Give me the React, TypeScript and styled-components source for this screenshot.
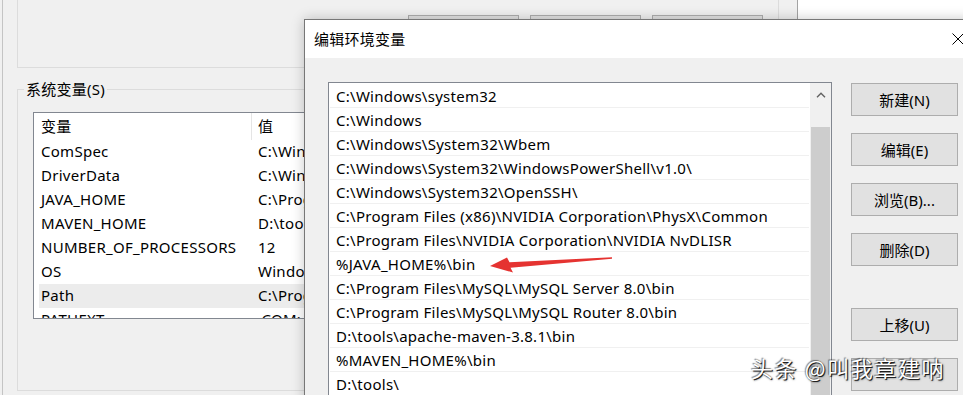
import React from 'react';
import styled, { createGlobalStyle } from 'styled-components';

const GlobalStyle = createGlobalStyle`
  html, body { margin: 0; padding: 0; width: 963px; height: 395px; overflow: hidden; background: #f0f0f0; }
  body { font-family: "Noto Sans", "Noto Sans CJK SC", sans-serif; font-size: 15px; letter-spacing: 0.27px; color: #000; }
  * { box-sizing: border-box; }
`;

const Screen = styled.div`
  position: relative;
  width: 963px;
  height: 395px;
  overflow: hidden;
  background: #f0f0f0;
  display: flex;
`;

const BackWindow = styled.div`
  margin-left: 2px;
  width: 796px;
  height: 395px;
  flex-shrink: 0;
  background: #f0f0f0;
  border-left: 1px solid #c4c4c4;
  border-right: 1px solid #a3a3a3;
  display: flex;
  flex-direction: column;
`;

const Desk = styled.div`
  flex: 1;
  background: #fff;
`;

const UpperGroup = styled.div`
  margin-left: 14px;
  width: 762px;
  height: 68px;
  border: 1px solid #dcdcdc;
  border-top: none;
  display: flex;
  justify-content: flex-end;
  align-items: flex-start;
  gap: 11px;
  padding: 15px 15px 0 0;
`;

const BgButton = styled.div`
  width: 111px;
  height: 23px;
  background: #e1e1e1;
  border: 1px solid #adadad;
`;

const GroupBox = styled.fieldset`
  margin: 11px 0 0 14px;
  width: 762px;
  height: 312px;
  border: 1px solid #dcdcdc;
  padding: 0;
  min-width: 0;
`;

const Legend = styled.legend`
  margin-left: 6px;
  padding: 0 2px;
  line-height: 20px;
  font-size: 15px;
`;

const VarList = styled.div`
  margin: 13px 0 0 15px;
  width: 700px;
  height: 207px;
  background: #fff;
  border: 1px solid #828790;
  overflow: hidden;
`;

const VarHeader = styled.div`
  display: grid;
  grid-template-columns: 218px 1fr;
  height: 27px;
`;

const HeaderCell = styled.div<{ $divider?: boolean }>`
  line-height: 27px;
  padding-left: ${p => (p.$divider ? '7px' : '6px')};
  border-right: ${p => (p.$divider ? '1px solid #e5e5e5' : 'none')};
  white-space: nowrap;
`;

const VarRows = styled.div`
  padding-left: 5px;
`;

const VarRow = styled.div<{ $selected?: boolean }>`
  display: grid;
  grid-template-columns: 212px 1fr;
  height: 24px;
  line-height: 23px;
  background: ${p => (p.$selected ? '#ececec' : 'transparent')};
  white-space: nowrap;
`;

const NameCell = styled.div`
  padding-left: 2px;
  overflow: hidden;
`;

const ValueCell = styled.div`
  padding-left: 7px;
  overflow: hidden;
`;

const Dialog = styled.div`
  position: absolute;
  left: 304px;
  top: 19px;
  width: 678px;
  height: 400px;
  border: 1px solid #777;
  box-shadow: 0 0 12px rgba(0, 0, 0, 0.22);
  display: flex;
  flex-direction: column;
  background: #f0f0f0;
`;

const TitleBar = styled.div`
  height: 38px;
  flex-shrink: 0;
  background: #fff;
  display: flex;
  align-items: center;
  justify-content: space-between;
  padding-left: 9px;
`;

const Title = styled.span`
  font-size: 15px;
  line-height: 20px;
`;

const CloseButton = styled.div`
  width: 46px;
  height: 38px;
  display: flex;
  align-items: center;
  justify-content: center;
`;

const Body = styled.div`
  flex: 1;
  display: flex;
  align-items: flex-start;
  gap: 19px;
  padding: 24px 0 0 23px;
`;

const PathList = styled.div`
  width: 504px;
  height: 340px;
  flex-shrink: 0;
  background: #fff;
  border: 1px solid #828790;
  display: flex;
`;

const PathRows = styled.div`
  flex: 1;
  padding-top: 1px;
  min-width: 0;
`;

const PathRow = styled.div`
  height: 24px;
  margin: 0 1px;
  border-bottom: 1px solid #f0f0f0;
  padding-left: 6px;
  line-height: 24px;
  white-space: nowrap;
  overflow: hidden;
`;

const Scrollbar = styled.div`
  width: 21px;
  flex-shrink: 0;
  background: #f0f0f0;
  display: flex;
  flex-direction: column;
`;

const ScrollArrow = styled.div`
  height: 24px;
  display: flex;
  align-items: center;
  justify-content: center;
`;

const Thumb = styled.div`
  flex: 1;
  margin: 20px 1px 0;
  background: #cdcdcd;
`;

const ButtonColumn = styled.div`
  display: flex;
  flex-direction: column;
  gap: 17px;
  padding-top: 1px;
`;

const DlgButton = styled.div<{ $spaced?: boolean }>`
  width: 107px;
  height: 33px;
  margin-top: ${p => (p.$spaced ? '25px' : '0')};
  background: #e1e1e1;
  border: 1px solid #adadad;
  display: flex;
  align-items: center;
  justify-content: center;
  font-size: 15px;
  letter-spacing: 0;
  white-space: nowrap;
`;

const Arrow = styled.svg`
  position: absolute;
  left: 480px;
  top: 250px;
  width: 140px;
  height: 30px;
`;

const Watermark = styled.div`
  position: absolute;
  left: 751px;
  top: 352px;
  font-family: "Noto Sans CJK SC", sans-serif;
  font-size: 22px;
  line-height: 30px;
  letter-spacing: 1.6px;
  color: #fff;
  white-space: nowrap;
  text-shadow: 1px 1px 0 rgba(0, 0, 0, 0.75), 1px 1px 2px rgba(0, 0, 0, 0.7), -1px -1px 1px rgba(0, 0, 0, 0.45);
`;

const vars: [string, string][] = [
  ['ComSpec', 'C:\\Windows\\system32\\cmd.exe'],
  ['DriverData', 'C:\\Windows\\System32\\Drivers\\DriverData'],
  ['JAVA_HOME', 'C:\\Program Files\\Java\\jdk1.8.0_291'],
  ['MAVEN_HOME', 'D:\\tools\\apache-maven-3.8.1'],
  ['NUMBER_OF_PROCESSORS', '12'],
  ['OS', 'Windows_NT'],
  ['Path', 'C:\\Program Files\\Common Files\\Oracle\\Java\\javapath'],
  ['PATHEXT', '.COM;.EXE;.BAT;.CMD;.VBS;.VBE;.JS;.JSE;.WSF;.WSH;.MSC'],
];

const paths = [
  'C:\\Windows\\system32',
  'C:\\Windows',
  'C:\\Windows\\System32\\Wbem',
  'C:\\Windows\\System32\\WindowsPowerShell\\v1.0\\',
  'C:\\Windows\\System32\\OpenSSH\\',
  'C:\\Program Files (x86)\\NVIDIA Corporation\\PhysX\\Common',
  'C:\\Program Files\\NVIDIA Corporation\\NVIDIA NvDLISR',
  '%JAVA_HOME%\\bin',
  'C:\\Program Files\\MySQL\\MySQL Server 8.0\\bin',
  'C:\\Program Files\\MySQL\\MySQL Router 8.0\\bin',
  'D:\\tools\\apache-maven-3.8.1\\bin',
  '%MAVEN_HOME%\\bin',
  'D:\\tools\\',
];

const buttons = [
  { key: 'new', label: '新建(N)' },
  { key: 'edit', label: '编辑(E)' },
  { key: 'browse', label: '浏览(B)...' },
  { key: 'delete', label: '删除(D)' },
  { key: 'up', label: '上移(U)', spaced: true },
  { key: 'down', label: '' },
];

export default function App() {
  return (
    <>
      <GlobalStyle />
      <Screen>
        <BackWindow>
          <UpperGroup>
            <BgButton />
            <BgButton />
            <BgButton />
          </UpperGroup>
          <GroupBox>
            <Legend>系统变量(S)</Legend>
            <VarList>
              <VarHeader>
                <HeaderCell $divider>变量</HeaderCell>
                <HeaderCell>值</HeaderCell>
              </VarHeader>
              <VarRows>
                {vars.map(([n, v]) => (
                  <VarRow key={n} $selected={n === 'Path'}>
                    <NameCell>{n}</NameCell>
                    <ValueCell>{v}</ValueCell>
                  </VarRow>
                ))}
              </VarRows>
            </VarList>
          </GroupBox>
        </BackWindow>
        <Desk />

        <Dialog>
          <TitleBar>
            <Title>编辑环境变量</Title>
            <CloseButton>
              <svg width="12" height="12" viewBox="0 0 12 12">
                <path d="M0.5 0.5 L11.5 11.5 M11.5 0.5 L0.5 11.5" stroke="#000" strokeWidth="1" fill="none" />
              </svg>
            </CloseButton>
          </TitleBar>
          <Body>
            <PathList>
              <PathRows>
                {paths.map(p => (
                  <PathRow key={p}>{p}</PathRow>
                ))}
              </PathRows>
              <Scrollbar>
                <ScrollArrow>
                  <svg width="10" height="6" viewBox="0 0 10 6">
                    <path d="M1 5.2 L5 1.2 L9 5.2" stroke="#606060" strokeWidth="1.4" fill="none" />
                  </svg>
                </ScrollArrow>
                <Thumb />
              </Scrollbar>
            </PathList>
            <ButtonColumn>
              {buttons.map(b => (
                <DlgButton key={b.key} $spaced={b.spaced}>
                  {b.label}
                </DlgButton>
              ))}
            </ButtonColumn>
          </Body>
        </Dialog>

        <Arrow viewBox="0 0 140 30">
          <polygon
            points="10,16 27,7.5 29.5,12.3 132,7.3 132,8.8 30.5,17.8 33,22.5"
            fill="#e53331"
          />
        </Arrow>

        <Watermark>头条 @叫我章建呐</Watermark>
      </Screen>
    </>
  );
}
